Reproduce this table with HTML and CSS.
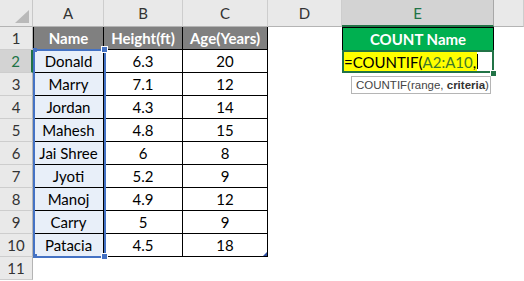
FILE: index.html
```html
<!DOCTYPE html>
<html>
<head>
<meta charset="utf-8">
<link rel="stylesheet" href="styles.css">
</head>
<body>
<div class="sheet">
  <div class="corner"><span class="tri"></span></div>
  <div class="ch">A</div><div class="ch">B</div><div class="ch">C</div><div class="ch">D</div><div class="ch active">E</div><div class="ch"></div>

  <div class="rh">1</div>
  <div class="c t l hd">Name</div><div class="c t hd">Height(ft)</div><div class="c t hd">Age(Years)</div><div class="c"></div><div class="c green">COUNT Name</div><div class="c"></div>

  <div class="rh active">2</div>
  <div class="c t l sel">Donald</div><div class="c t">6.3</div><div class="c t">20</div><div class="c"></div><div class="c edit"><span class="hl">=COUNTIF(<span class="ref">A2:A10</span>,</span><span class="caret"></span></div><div class="c"></div>

  <div class="rh">3</div>
  <div class="c t l sel">Marry</div><div class="c t">7.1</div><div class="c t">12</div><div class="c"></div><div class="c"></div><div class="c"></div>

  <div class="rh">4</div>
  <div class="c t l sel">Jordan</div><div class="c t">4.3</div><div class="c t">14</div><div class="c"></div><div class="c"></div><div class="c"></div>

  <div class="rh">5</div>
  <div class="c t l sel">Mahesh</div><div class="c t">4.8</div><div class="c t">15</div><div class="c"></div><div class="c"></div><div class="c"></div>

  <div class="rh">6</div>
  <div class="c t l sel">Jai Shree</div><div class="c t">6</div><div class="c t">8</div><div class="c"></div><div class="c"></div><div class="c"></div>

  <div class="rh">7</div>
  <div class="c t l sel">Jyoti</div><div class="c t">5.2</div><div class="c t">9</div><div class="c"></div><div class="c"></div><div class="c"></div>

  <div class="rh">8</div>
  <div class="c t l sel">Manoj</div><div class="c t">4.9</div><div class="c t">12</div><div class="c"></div><div class="c"></div><div class="c"></div>

  <div class="rh">9</div>
  <div class="c t l sel">Carry</div><div class="c t">5</div><div class="c t">9</div><div class="c"></div><div class="c"></div><div class="c"></div>

  <div class="rh">10</div>
  <div class="c t l sel">Patacia</div><div class="c t">4.5</div><div class="c t">18</div><div class="c"></div><div class="c"></div><div class="c"></div>

  <div class="rh">11</div>
  <div class="c"></div><div class="c"></div><div class="c"></div><div class="c"></div><div class="c"></div><div class="c"></div>

  <div class="range"></div>
  <div class="handle h-tl"></div>
  <div class="handle h-tr"></div>
  <div class="handle h-bl"></div>
  <div class="handle h-br"></div>
  <div class="fill-handle"></div>
  <div class="quick"></div>
  <div class="tip">COUNTIF(range, <b>criteria</b>)</div>
</div>
</body>
</html>
```
FILE: styles.css
```css
* { box-sizing: border-box; }
body { margin: 0; background: #fff; font-family: Lato, "Liberation Sans", sans-serif; }
.sheet {
  position: relative;
  display: grid;
  grid-template-columns: 33px 71px 79px 85px 74px 152px 30px;
  grid-template-rows: 27px repeat(11, 23px);
  width: 524px;
  height: 281px;
  overflow: hidden;
  font-size: 15px;
  color: #000;
}
.corner {
  background: #e9e9e9;
  border-right: 1px solid #c8c8c8;
  border-bottom: 1px solid #b4b4b4;
  display: flex;
  align-items: flex-end;
  justify-content: flex-end;
  padding: 0 3px 3px 0;
}
.tri {
  width: 0; height: 0;
  border-left: 14px solid transparent;
  border-bottom: 13px solid #b9b9b9;
}
.ch {
  background: #e9e9e9;
  border-right: 1px solid #cdcdcd;
  border-bottom: 1px solid #b4b4b4;
  display: flex; align-items: center; justify-content: center;
  color: #333;
}
.ch.active { background: #d3d3d3; color: #217346; border-bottom: 2px solid #217346; border-right-color: #a8a8a8; }
.rh {
  background: #e9e9e9;
  border-right: 1px solid #b4b4b4;
  border-bottom: 1px solid #cdcdcd;
  display: flex; align-items: center; justify-content: center;
  color: #333;
}
.rh.active { background: #d3d3d3; color: #217346; border-right: 2px solid #217346; }
.c { display: flex; align-items: center; justify-content: center; white-space: nowrap; }
.t { border-right: 1px solid #000; border-bottom: 1px solid #000; }
.l { border-left: 1px solid #000; }
.hd { background: #808080; color: #fff; font-weight: bold; }
.sel { background: #e8eff9; }
.green { background: #00b050; color: #fff; font-weight: bold; border: 1px solid #000; border-bottom: none; }
.edit {
  border: 2px solid #217346;
  justify-content: flex-start;
  align-items: stretch;
  padding: 0;
}
.hl { background: #ffff00; display: flex; align-items: center; padding: 0 1px 0 0; }
.ref { color: #3e7a2a; }
.caret { width: 1px; background: #000; margin: 2px 0; }
.range {
  position: absolute; left: 33px; top: 49px; width: 73px; height: 209px;
  border: 2px solid #4472c4;
}
.handle { position: absolute; background: #4472c4; }
.h-tl { left: 33px; top: 48px; width: 4px; height: 4px; }
.h-bl { left: 33px; top: 254px; width: 4px; height: 4px; }
.h-tr { left: 101px; top: 46px; width: 7px; height: 7px; border: 1px solid #fff; }
.h-br { left: 101px; top: 253px; width: 7px; height: 7px; border: 1px solid #fff; }
.fill-handle { position: absolute; left: 490px; top: 70px; width: 7px; height: 7px; background: #217346; border: 1px solid #fff; }
.quick {
  position: absolute; left: 263px; top: 252px; width: 0; height: 0;
  border-left: 4px solid transparent; border-bottom: 4px solid #2f4ea0;
}
.tip {
  position: absolute; left: 351px; top: 76px; width: 140px; height: 18px;
  background: #fff; border: 1px solid #b5b5b5;
  font-family: "Liberation Sans", sans-serif; font-size: 11.5px; color: #444;
  line-height: 16px; padding: 0 4px; white-space: nowrap;
}
.tip b { color: #333; }
```
